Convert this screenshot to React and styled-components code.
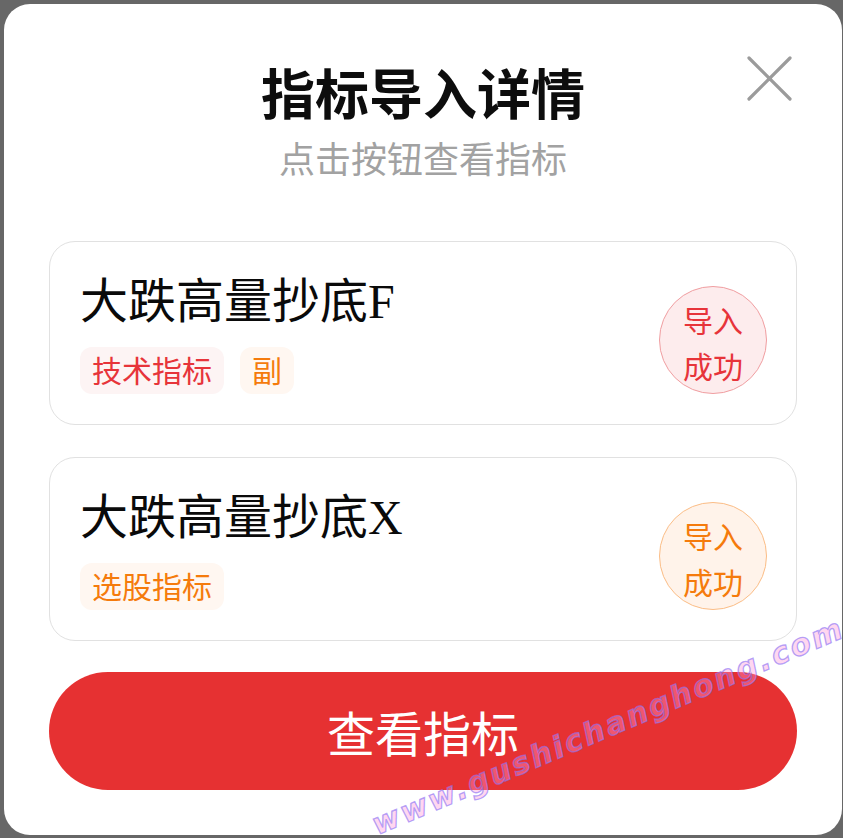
import React from "react";
import styled, { createGlobalStyle } from "styled-components";

const GlobalStyle = createGlobalStyle`
  html, body {
    margin: 0;
    padding: 0;
    background: #676767;
    font-family: "Noto Sans CJK SC", "Noto Sans", sans-serif;
  }
  * { box-sizing: border-box; }
`;

const Page = styled.div`
  position: relative;
  width: 843px;
  height: 838px;
  padding: 4px 1px 3px 4px;
  overflow: hidden;
`;

const Modal = styled.div`
  position: relative;
  width: 838px;
  height: 831px;
  background: #ffffff;
  border-radius: 26px;
  padding: 56px 45px 45px;
  display: flex;
  flex-direction: column;
`;

const Close = styled.button`
  position: absolute;
  top: 52px;
  right: 50px;
  width: 45px;
  height: 45px;
  padding: 0;
  border: none;
  background: transparent;
  display: flex;
  align-items: center;
  justify-content: center;
`;

const Title = styled.h1`
  margin: 0;
  text-align: center;
  font-size: 54px;
  line-height: 64px;
  font-weight: 700;
  color: #0d0d0d;
`;

const Subtitle = styled.p`
  margin: 11px 0 0;
  text-align: center;
  font-size: 36px;
  line-height: 44px;
  color: #a2a2a2;
`;

const CardList = styled.div`
  margin-top: 62px;
  display: flex;
  flex-direction: column;
  gap: 32px;
`;

const Card = styled.div`
  border: 1px solid #e1e1e1;
  border-radius: 26px;
  padding: 32px 29px 30px 30px;
  display: flex;
  align-items: flex-end;
  justify-content: space-between;
`;

const CardMain = styled.div`
  display: flex;
  flex-direction: column;
  gap: 17px;
`;

const CardTitle = styled.div`
  font-family: "Liberation Serif", "Noto Sans CJK SC", serif;
  font-size: 48px;
  line-height: 56px;
  color: #0a0a0a;
`;

const Tags = styled.div`
  display: flex;
  gap: 16px;
`;

const palettes = {
  red: { text: "#e7343a", tagBg: "#fdf4f4", circleBg: "#fdeced", border: "#f09ea1" },
  orange: { text: "#f57b0c", tagBg: "#fff7f1", circleBg: "#fff3ea", border: "#fbbd86" },
};

const Tag = styled.span`
  height: 47px;
  padding: 0 12px;
  border-radius: 12px;
  font-size: 30px;
  line-height: 45px;
  color: ${(p) => palettes[p.$tone].text};
  background: ${(p) => palettes[p.$tone].tagBg};
`;

const Badge = styled.div`
  width: 108px;
  height: 108px;
  border-radius: 50%;
  border: 1px solid ${(p) => palettes[p.$tone].border};
  background: ${(p) => palettes[p.$tone].circleBg};
  color: ${(p) => palettes[p.$tone].text};
  font-size: 30px;
  line-height: 46px;
  text-align: center;
  display: flex;
  flex-direction: column;
  align-items: center;
  justify-content: center;
  padding-top: 4px;
  flex-shrink: 0;
`;

const Button = styled.button`
  margin-top: 31px;
  height: 119px;
  width: 100%;
  border: none;
  border-radius: 60px;
  background: #e63132;
  color: #ffffff;
  font-family: "Noto Sans CJK SC", sans-serif;
  font-size: 48px;
  line-height: 56px;
`;

const Watermark = styled.div`
  position: absolute;
  left: 608px;
  top: 726px;
  transform: translate(-50%, -50%) rotate(-23deg);
  white-space: nowrap;
  font-family: "DejaVu Sans", sans-serif;
  font-weight: 700;
  font-style: italic;
  font-size: 30px;
  letter-spacing: 2.6px;
  color: rgba(255, 150, 215, 0.4);
  -webkit-text-stroke: 1.3px rgba(140, 115, 245, 0.65);
  pointer-events: none;
`;

const items = [
  { name: "大跌高量抄底F", tone: "red", tags: [{ t: "技术指标", tone: "red" }, { t: "副", tone: "orange" }] },
  { name: "大跌高量抄底X", tone: "orange", tags: [{ t: "选股指标", tone: "orange" }] },
];

export default function App() {
  return (
    <>
      <GlobalStyle />
      <Page>
        <Modal>
          <Close aria-label="关闭">
            <svg width="45" height="45" viewBox="0 0 45 45">
              <path d="M2 2 L43 43 M43 2 L2 43" stroke="#9b9b9b" strokeWidth="3.2" strokeLinecap="round" />
            </svg>
          </Close>
          <Title>指标导入详情</Title>
          <Subtitle>点击按钮查看指标</Subtitle>
          <CardList>
            {items.map((it) => (
              <Card key={it.name}>
                <CardMain>
                  <CardTitle>{it.name}</CardTitle>
                  <Tags>
                    {it.tags.map((tg) => (
                      <Tag key={tg.t} $tone={tg.tone}>{tg.t}</Tag>
                    ))}
                  </Tags>
                </CardMain>
                <Badge $tone={it.tone}>
                  <span>导入</span>
                  <span>成功</span>
                </Badge>
              </Card>
            ))}
          </CardList>
          <Button>查看指标</Button>
        </Modal>
        <Watermark>www.gushichanghong.com</Watermark>
      </Page>
    </>
  );
}
